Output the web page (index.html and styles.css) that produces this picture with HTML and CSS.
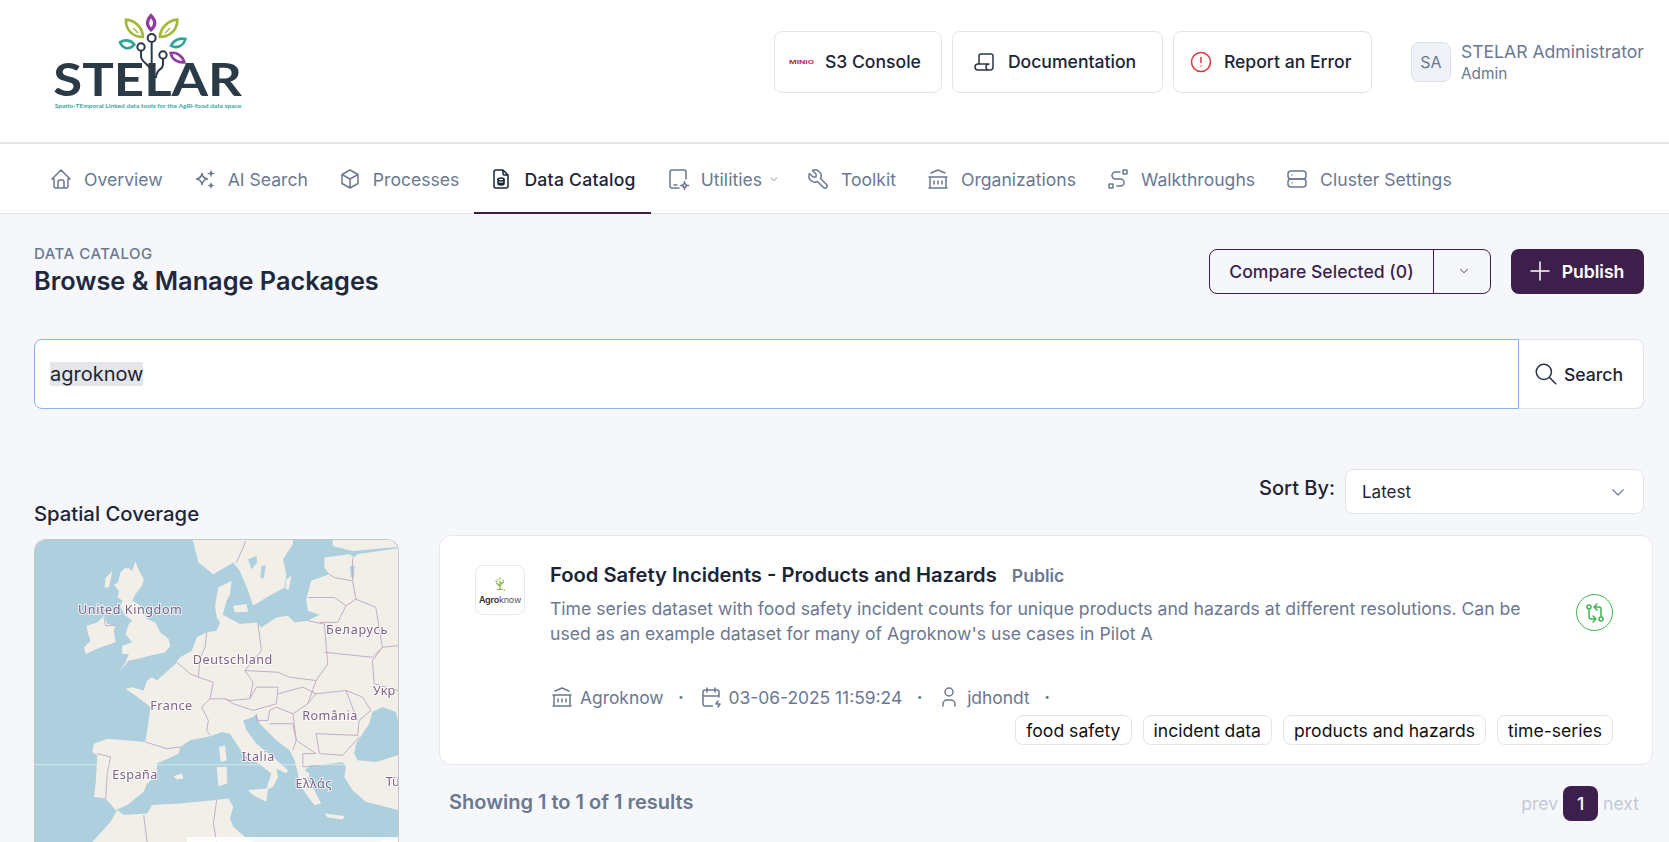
FILE: index.html
```html
<!DOCTYPE html>
<html lang="en">
<head>
<meta charset="utf-8">
<title>STELAR - Data Catalog</title>
<link rel="stylesheet" href="styles.css">
</head>
<body>
<header class="topbar">
  <svg class="logo" viewBox="150 40 600 348" aria-label="STELAR logo">
    <g fill="none" stroke-width="8">
      <path d="M378 60C405 62 430 85 428 112C400 112 376 92 378 60Z" stroke="#a3b83a"/>
      <path d="M400 85L414 100" stroke="#a3b83a" stroke-width="4"/>
      <path d="M532 60C505 62 480 85 480 112C508 112 532 92 532 60Z" stroke="#a3b83a"/>
      <path d="M510 85L496 100" stroke="#a3b83a" stroke-width="4"/>
      <path d="M453 48C466 62 470 75 453 90C437 75 441 62 453 48Z" stroke="#8e3f9c" stroke-width="10"/>
      <path d="M360 128C375 118 395 122 403 135C388 152 368 148 360 128Z" stroke="#2fa39a"/>
      <path d="M556 118C540 114 520 122 513 138C530 148 550 140 556 118Z" stroke="#2fa39a"/>
      <path d="M512 160C530 156 548 170 553 188C534 190 516 180 512 160Z" stroke="#8e3f9c"/>
      <g stroke="#2b3a47" stroke-width="6">
        <path d="M455 128V235M423 154V170C423 190 455 195 455 222M489 178V195C489 212 468 205 468 235"/>
        <circle cx="455" cy="115" r="12"/>
        <circle cx="423" cy="142" r="11"/>
        <circle cx="489" cy="166" r="11"/>
      </g>
    </g>
    <text class="logo-word" x="160" y="290" textLength="566" lengthAdjust="spacingAndGlyphs">STELAR</text>
    <text class="logo-tag" x="164" y="324" textLength="560" lengthAdjust="spacingAndGlyphs">Spatio-TEmporal Linked data tools for the AgRi-food data space</text>
  </svg>
  <div class="top-actions">
    <a class="top-btn s3">
      <svg class="minio" viewBox="0 0 26 6"><text x="0" y="5.200" textLength="26" lengthAdjust="spacingAndGlyphs">MINIO</text></svg>
      S3 Console
    </a>
    <a class="top-btn doc">
      <svg class="ico i-dark" viewBox="0 0 24 24"><path d="M17 20h-11a3 3 0 0 1 0 -6h11a3 3 0 0 0 0 6h1a3 3 0 0 0 3 -3v-11a2 2 0 0 0 -2 -2h-10a2 2 0 0 0 -2 2v8"/></svg>
      Documentation
    </a>
    <a class="top-btn err">
      <svg class="ico i-red" viewBox="0 0 24 24"><circle cx="12" cy="12" r="9.500"/><path d="M12 7.500v5M12 16h.01"/></svg>
      Report an Error
    </a>
  </div>
  <div class="user">
    <span class="avatar">SA</span>
    <div class="user-text">
      <div class="user-name">STELAR Administrator</div>
      <div class="user-role">Admin</div>
    </div>
  </div>
</header>

<nav class="tabs">
  <a class="tab"><svg class="ico" viewBox="0 0 24 24"><path d="M5 12h-2l9-9l9 9h-2M5 12v7a2 2 0 0 0 2 2h10a2 2 0 0 0 2-2v-7M9 21v-6a2 2 0 0 1 2-2h2a2 2 0 0 1 2 2v6"/></svg>Overview</a>
  <a class="tab"><svg class="ico" viewBox="0 0 24 24"><path d="M9 6.500c.6 3.400 2.400 5 5.500 5.500c-3.100 .5-4.900 2.100-5.500 5.500c-.6-3.400-2.400-5-5.500-5.500c3.100-.5 4.900-2.100 5.500-5.500z"/><path class="solid" d="M18 2.500l1 3l3 1l-3 1l-1 3l-1-3l-3-1l3-1zM18 15l1 2.500l2.500 1l-2.500 1l-1 2.500l-1-2.500l-2.500-1l2.500-1z"/></svg>AI Search</a>
  <a class="tab"><svg class="ico" viewBox="0 0 24 24"><path d="M12 3l8 4.500v9l-8 4.500l-8-4.500v-9zM12 12l8-4.500M12 12v9M12 12l-8-4.500"/></svg>Processes</a>
  <a class="tab active"><svg class="ico" viewBox="0 0 24 24"><path d="M14 3v4a1 1 0 0 0 1 1h4M17 21h-10a2 2 0 0 1-2-2v-14a2 2 0 0 1 2-2h7l5 5v11a2 2 0 0 1-2 2z"/><ellipse cx="12" cy="12.500" rx="3" ry="1.500"/><path d="M9 12.500v4c0 .8 1.300 1.500 3 1.500s3-.7 3-1.500v-4M9 15c0 .8 1.300 1.500 3 1.500s3-.7 3-1.500"/></svg>Data Catalog</a>
  <a class="tab"><svg class="ico" viewBox="0 0 24 24"><path d="M20 12v-7a2 2 0 0 0-2-2h-12a2 2 0 0 0-2 2v14a2 2 0 0 0 2 2h7M8 18h3"/><circle cx="18.500" cy="18.500" r="1.800"/><path d="M18.500 14.500v2M18.500 20.500v2M14.500 18.500h2M20.500 18.500h2"/></svg>Utilities<svg class="chev" viewBox="0 0 24 24"><path d="M5 9l7 7l7-7"/></svg></a>
  <a class="tab"><svg class="ico" viewBox="0 0 24 24"><path d="M7 10h3v-3l-3.500-3.500a6 6 0 0 1 8 8l6 6a2 2 0 0 1-3 3l-6-6a6 6 0 0 1-8-8l3.500 3.500"/></svg>Toolkit</a>
  <a class="tab"><svg class="ico" viewBox="0 0 24 24"><path d="M3 21h18M3 10h18M5 6l7-3l7 3M4 10v11M20 10v11M8 14v3M12 14v3M16 14v3"/></svg>Organizations</a>
  <a class="tab"><svg class="ico" viewBox="0 0 24 24"><rect x="3" y="17" width="4" height="4" rx=".5"/><rect x="17" y="3" width="4" height="4" rx=".5"/><path d="M14 5h-4.500a3.500 3.500 0 0 0 0 7h5a3.500 3.500 0 0 1 0 7h-3.500"/></svg>Walkthroughs</a>
  <a class="tab"><svg class="ico" viewBox="0 0 24 24"><rect x="3" y="4" width="18" height="8" rx="3"/><rect x="3" y="12" width="18" height="8" rx="3"/><path d="M7 8v.01M7 16v.01"/></svg>Cluster Settings</a>
</nav>

<main class="page">
  <section class="page-head">
    <div>
      <div class="eyebrow">DATA CATALOG</div>
      <h1 class="title">Browse &amp; Manage Packages</h1>
    </div>
    <div class="head-actions">
      <div class="split">
        <span class="split-main">Compare Selected (0)</span>
        <span class="split-caret"><svg class="chev" viewBox="0 0 24 24"><path d="M6 9l6 6l6-6"/></svg></span>
      </div>
      <a class="publish"><svg class="ico" viewBox="0 0 24 24"><path d="M12 3v18M3 12h18"/></svg>Publish</a>
    </div>
  </section>

  <section class="searchbar">
    <div class="search-input"><span class="selected">agroknow</span></div>
    <div class="search-btn"><svg class="ico i-dark" viewBox="0 0 24 24"><path d="M3 10a7 7 0 1 0 14 0a7 7 0 1 0-14 0M21 21l-6-6"/></svg>Search</div>
  </section>

  <section class="content">
    <aside class="side">
      <h2 class="side-title">Spatial Coverage</h2>
      <div class="map">
        <svg class="map-svg" viewBox="102 147 1095 909" preserveAspectRatio="none">
          <rect x="102" y="147" width="1095" height="909" fill="#aed0de"/>
          <g class="land">
            <path d="M375 595L395 590L430 600L440 570L455 560L470 570L525 520L540 500L575 480L590 440L620 425L650 420L660 395L650 380L645 345L655 290L695 270L690 310L680 330L668 372L680 378L720 400L770 395L785 410L830 380L865 375L885 395L925 390L960 372L925 360L920 325L935 270L990 250L975 230L975 200L1050 190L1065 200L1075 190L1197 172V960L1100 935L1060 900L1035 860L1040 830L1030 815L960 825L935 825L915 840L930 850L925 870L945 900L965 940L945 945L925 920L900 880L895 850L885 810L870 780L830 750L780 700L770 670L760 680L730 690L740 720L770 760L825 805L865 840L860 850L830 835L835 860L820 890L800 900L805 880L815 850L790 830L730 790L690 730L665 725L640 735L620 740L570 750L540 770L535 790L470 820L470 855L440 880L430 905L380 945L345 960L315 925L280 920L285 880L290 795L275 785L280 760L320 745L435 755L445 690L450 650L405 615Z"/>
            <path d="M405 210L412 232L430 265L425 285L405 310L395 330L420 345L440 385L465 395L480 425L505 445L510 465L495 485L450 495L410 505L385 510L355 545L375 515L385 490L365 490L365 465L395 455L375 430L385 400L395 390L370 370L360 345L366 330L352 320L355 300L340 282L352 275L360 245L372 232L385 232L395 240Z"/>
            <path d="M315 262L335 240L325 290L312 290Z"/>
            <path d="M310 375L320 400L345 405L340 420L345 455L300 470L255 490L250 470L270 450L262 430L258 405L290 395Z"/>
            <path d="M578 147L595 215L640 250L700 215L720 240L745 300L760 345L800 320L855 290L860 250L850 205L880 160L880 147Z"/>
            <path d="M1000 147H1197V168L1060 180L1000 165Z"/>
            <path d="M700 345L740 340L745 362L705 365Z"/>
            <path d="M657 770L675 765L680 810L662 815Z"/>
            <path d="M650 830L680 830L682 880L655 888Z"/>
            <path d="M745 900L805 895L800 935L760 915Z"/>
            <path d="M520 858L545 850L550 865L530 868Z"/>
            <path d="M975 970L1035 978L1030 988L985 982Z"/>
            <path d="M275 1056L330 995L350 960L370 975L440 970L455 945L540 940L640 930L685 925L700 950L690 985L700 1010L735 1040L760 1056Z"/>
            <path d="M860 265L875 255L868 295L858 295Z"/>
            <path d="M1140 1056L1197 1040V1056Z"/>
          </g>
          <path class="sea" d="M1065 790L1070 760L1110 700L1120 665L1150 650L1190 665L1197 690V795L1130 815L1075 810Z"/>
          <path class="sea" d="M745 205L770 195L772 215L755 235Z"/>
          <path class="sea" d="M785 225L798 222L792 262L782 262Z"/>
          <path class="sea" d="M1052 225L1066 225L1064 262L1055 258Z"/>
          <path class="border" d="M310 380L315 405L345 405M620 425L615 470L600 500L595 560L640 575L630 625L605 650L625 690L620 720L630 735M530 515L570 550L595 560M775 400L785 480L735 540L760 575L750 625L690 630L675 625L630 625M925 390L975 400L985 520M985 520L950 570L870 560L835 545L735 540M975 485L1120 500L1150 470L1197 465M925 320L1005 320L1040 345L1070 325L1060 270L1005 260L990 250M1040 345L1015 395L960 395M1070 325L1130 350L1150 470M750 625L770 590L835 590L830 640L760 660L700 640L675 625M835 610L910 590L950 610L1040 600L1090 620L1115 660L1080 690L1075 735L950 730M950 570L925 640L880 670L830 650M925 640L950 610M950 730L960 790L1030 795L1080 740M810 700L880 700L890 750L880 780M880 670L890 750L950 790L910 790L910 830L960 825M770 670L770 690L805 690L810 660L830 650M1040 600L1075 690M290 790L330 800L320 850L315 925M435 755L500 775L540 770M1150 470L1120 510L1125 580L1197 600M650 930L640 1000L650 1056M430 975L440 1056M738 150L710 215M1060 200L1060 270"/>
          <path class="seam" d="M102 823.500H1197"/>
          <g class="maplabels">
            <text x="232" y="370" textLength="313">United Kingdom</text>
            <text x="980" y="430" textLength="185">Беларусь</text>
            <text x="578" y="520" textLength="240">Deutschland</text>
            <text x="450" y="660" textLength="126">France</text>
            <text x="1122" y="615">Укр</text>
            <text x="908" y="689" textLength="166">România</text>
            <text x="726" y="812" textLength="98">Italia</text>
            <text x="335" y="865" textLength="136">España</text>
            <text x="888" y="894" textLength="108">Ελλάς</text>
            <text x="1160" y="888">Tü</text>
          </g>
        </svg>
        <div class="map-attrib"></div>
      </div>
    </aside>

    <div class="results">
      <div class="sort-row">
        <span class="sort-label">Sort By:</span>
        <div class="select">Latest<svg class="chev" viewBox="0 0 24 24"><path d="M5 9l7 7l7-7"/></svg></div>
      </div>

      <article class="card">
        <div class="card-logo">
          <svg class="tree" viewBox="0 0 24 24">
            <path d="M12 6V18M12 14L7 9M12 12L17 8M8 18H16" stroke="#7fb23f" stroke-width="1.500" fill="none"/>
            <g fill="#9cc04f"><circle cx="12" cy="3" r="1.200"/><circle cx="7" cy="7" r="1.200"/><circle cx="16.500" cy="6" r="1.200"/><circle cx="9" cy="5" r="1"/><circle cx="14" cy="9" r="1"/><circle cx="18" cy="19" r="1"/></g>
          </svg>
          <span class="ak"><b>Agro</b>know</span>
        </div>
        <div class="card-body">
          <div class="card-top">
            <div class="card-text">
              <div class="card-title-row">
                <h3 class="card-title">Food Safety Incidents - Products and Hazards</h3>
                <span class="badge">Public</span>
              </div>
              <p class="desc">Time series dataset with food safety incident counts for unique products and hazards at different resolutions. Can be used as an example dataset for many of Agroknow's use cases in Pilot A</p>
            </div>
            <span class="compare"><svg class="ico" viewBox="0 0 24 24"><path d="M4 6a2 2 0 1 0 4 0a2 2 0 1 0-4 0M16 18a2 2 0 1 0 4 0a2 2 0 1 0-4 0M11 6h5a2 2 0 0 1 2 2v8M14 9l-3-3l3-3M13 18h-5a2 2 0 0 1-2-2v-8M10 15l3 3l-3 3"/></svg></span>
          </div>
          <div class="meta">
            <svg class="ico" viewBox="0 0 24 24"><path d="M3 21h18M3 10h18M5 6l7-3l7 3M4 10v11M20 10v11M8 14v3M12 14v3M16 14v3"/></svg>
            <span>Agroknow</span><span class="dot">·</span>
            <svg class="ico" viewBox="0 0 24 24"><path d="M13.500 21h-7.500a2 2 0 0 1-2-2v-12a2 2 0 0 1 2-2h12a2 2 0 0 1 2 2v5M16 3v4M8 3v4M4 11h16M19 16l-2 3h4l-2 3"/></svg>
            <span>03-06-2025 11:59:24</span><span class="dot">·</span>
            <svg class="ico" viewBox="0 0 24 24"><path d="M8 7a4 4 0 1 0 8 0a4 4 0 0 0-8 0M6 21v-2a4 4 0 0 1 4-4h4a4 4 0 0 1 4 4v2"/></svg>
            <span>jdhondt</span><span class="dot">·</span>
          </div>
          <div class="tags">
            <span class="tag">food safety</span>
            <span class="tag">incident data</span>
            <span class="tag">products and hazards</span>
            <span class="tag">time-series</span>
          </div>
        </div>
      </article>

      <div class="summary">
        <span class="showing">Showing 1 to 1 of 1 results</span>
        <div class="pager"><span>prev</span><b>1</b><span>next</span></div>
      </div>
    </div>
  </section>
</main>
</body>
</html>
```

FILE: styles.css
```css
* { box-sizing: border-box; }
html, body { margin: 0; height: 842px; overflow: hidden; }
body {
  background: #f6f7fb;
  color: #1b2536;
  font-family: Inter, "Liberation Sans", sans-serif;
}
h1, h2, h3, p { margin: 0; }

.ico {
  width: 24px;
  height: 24px;
  flex: none;
  fill: none;
  stroke: currentColor;
  stroke-width: 1.5;
  stroke-linecap: round;
  stroke-linejoin: round;
}
.ico .solid { fill: currentColor; stroke: none; }
.chev {
  fill: none;
  stroke: currentColor;
  stroke-width: 2;
  stroke-linecap: round;
  stroke-linejoin: round;
  flex: none;
}

/* top bar */
.topbar {
  height: 144px;
  background: #fff;
  border-bottom: 2px solid #e4e6ec;
  display: flex;
  align-items: center;
  padding-left: 50px;
  padding-right: 25px;
}
.logo { width: 200px; height: 116px; flex: none; }
.logo-word { font: 700 140px Lato, Inter, sans-serif; fill: #2b3a47; }
.logo-tag { font: 700 15px Lato, Inter, sans-serif; fill: #3aa79c; }
.top-actions {
  display: flex;
  gap: 10px;
  margin-left: auto;
  margin-bottom: 19px;
}
.top-btn {
  height: 62px;
  display: flex;
  align-items: center;
  background: #fff;
  border: 1px solid #e2e4ec;
  border-radius: 8px;
  font-size: 17.6px;
  font-weight: 500;
  color: #1b2536;
}
.s3 { width: 168px; padding-left: 14px; gap: 11px; }
.doc { width: 211px; padding-left: 19px; gap: 12px; }
.err { width: 199px; padding-left: 15px; gap: 11px; }
.minio { width: 25px; height: 6px; flex: none; }
.minio text { font: 700 5.5px Inter, sans-serif; fill: #c72c48; }
.i-dark { color: #2a3647; }
.i-red { color: #d9363e; }
.user { display: flex; align-items: center; gap: 10px; margin-left: 39px; margin-bottom: 19px; }
.avatar {
  width: 40px;
  height: 40px;
  display: flex;
  align-items: center;
  justify-content: center;
  background: #eff2f6;
  border: 1px solid #dde2ea;
  border-radius: 8px;
  font-size: 16px;
  color: #6b7890;
}
.user-text { padding-top: 2px; }
.user-name { font-size: 17.6px; line-height: 22px; color: #6b7890; }
.user-role { font-size: 15.4px; line-height: 22px; color: #6b7890; }

/* tabs */
.tabs {
  height: 70px;
  background: #fff;
  border-bottom: 1px solid #e1e3ea;
  display: flex;
  padding-left: 34px;
}
.tab {
  display: flex;
  align-items: center;
  gap: 11px;
  height: 70px;
  padding: 0 15px;
  font-size: 17.6px;
  color: #6b7890;
}
.tab .chev { width: 10px; height: 10px; margin: 0 -3px 0 -4px; }
.active {
  color: #1b2536;
  padding-top: 2px;
  border-bottom: 2px solid #3d1f4b;
  font-weight: 450;
  letter-spacing: .25px;
}

/* page */
.page { padding: 32px 25px 0 34px; }
.page-head { display: flex; justify-content: space-between; align-items: center; }
.eyebrow { font-size: 15px; line-height: 16px; font-weight: 500; color: #6b7890; letter-spacing: .5px; }
.title { font-size: 25.3px; line-height: 31px; font-weight: 600; color: #1e2a3b; margin-top: 3px; }
.head-actions { display: flex; gap: 20px; }
.split {
  width: 282px;
  height: 45px;
  display: flex;
  border: 1px solid #3d1f4b;
  border-radius: 8px;
  color: #3d1f4b;
  font-size: 17.6px;
  font-weight: 500;
}
.split-main { flex: 1; display: flex; align-items: center; justify-content: center; border-right: 1px solid #3d1f4b; }
.split-caret { width: 56px; padding-left: 4px; display: flex; align-items: center; justify-content: center; }
.split-caret .chev { width: 14px; height: 14px; stroke-width: 1.5; }
.publish {
  width: 133px;
  height: 45px;
  display: flex;
  align-items: center;
  justify-content: center;
  gap: 10px;
  padding-right: 3px;
  background: #3d1f4b;
  color: #fff;
  border-radius: 8px;
  font-size: 17.6px;
  font-weight: 600;
}
.searchbar { display: flex; height: 70px; margin-top: 43px; }
.search-input {
  flex: 1;
  display: flex;
  align-items: center;
  padding-left: 15px;
  background: #fff;
  border: 1px solid #84b5ee;
  border-radius: 8px 0 0 8px;
  font-size: 20px;
  color: #1b2536;
}
.selected { background: #e6e6ea; line-height: 24px; }
.search-btn {
  width: 125px;
  display: flex;
  align-items: center;
  gap: 5px;
  padding-left: 14px;
  background: #fff;
  border: 1px solid #e2e4ec;
  border-left: 0;
  border-radius: 0 8px 8px 0;
  font-size: 17.6px;
  font-weight: 500;
}
.search-btn .ico { width: 26px; height: 26px; stroke-width: 1.4; }

/* content */
.content {
  display: grid;
  grid-template-columns: 365px 1fr;
  column-gap: 40px;
  margin-top: 60px;
}
.side { padding-top: 31px; }
.side-title { font-size: 20.3px; line-height: 28px; font-weight: 500; margin-bottom: 11px; color: #1b2536; }
.map {
  position: relative;
  height: 303px;
  border: 1px solid #c8c8c8;
  border-bottom: 0;
  border-radius: 12px 12px 0 0;
  overflow: hidden;
}
.map-svg { display: block; width: 100%; height: 100%; filter: blur(.35px); }
.land { fill: #f2efe9; }
.sea { fill: #aed0de; }
.border { fill: none; stroke: #c3adc6; stroke-width: 3; stroke-linejoin: round; }
.seam { stroke: #e6f6fb; stroke-width: 2; fill: none; }
.maplabels text {
  font-family: "Noto Sans", sans-serif;
  font-size: 38px;
  fill: #7d6286;
  stroke: #fff;
  stroke-opacity: .75;
  stroke-width: 6px;
  paint-order: stroke;
}
.map-attrib {
  position: absolute;
  right: 0;
  bottom: 0;
  width: 211px;
  height: 5px;
  background: rgba(255, 255, 255, .85);
}

.results { min-width: 0; }
.sort-row { display: flex; justify-content: flex-end; align-items: center; gap: 10px; height: 45px; }
.sort-label { font-size: 20px; font-weight: 500; color: #1b2536; margin-top: -8px; }
.select {
  width: 299px;
  height: 45px;
  display: flex;
  align-items: center;
  justify-content: space-between;
  padding: 0 16px;
  background: #fff;
  border: 1px solid #e2e4ec;
  border-radius: 8px;
  font-size: 17px;
}
.select .chev { width: 18px; height: 18px; color: #6b7890; stroke-width: 1.5; }

.card {
  margin: 21px -9px 0 0;
  height: 230px;
  display: flex;
  gap: 25px;
  padding: 29px 39px 0 35px;
  background: #fff;
  border: 1px solid #e6e8ee;
  border-radius: 12px;
}
.card-logo {
  width: 50px;
  height: 50px;
  flex: none;
  display: flex;
  flex-direction: column;
  align-items: center;
  justify-content: center;
  background: #fff;
  border: 1px solid #e6e8ee;
  border-radius: 8px;
}
.tree { width: 18px; height: 18px; }
.ak { font-size: 9px; line-height: 11px; color: #555; letter-spacing: -.2px; }
.ak b { color: #333; font-weight: 600; }
.card-body { flex: 1; min-width: 0; margin-top: -2px; }
.card-top { display: flex; justify-content: space-between; height: 83px; }
.card-text { width: 990px; }
.card-title-row { display: flex; align-items: center; gap: 15px; height: 24px; }
.card-title { font-size: 20.2px; line-height: 24px; font-weight: 600; color: #1b2536; }
.badge { font-size: 17.6px; font-weight: 600; color: #6b7890; }
.desc { margin-top: 9px; font-size: 17.6px; line-height: 25px; color: #6b7890; }
.compare {
  width: 37px;
  height: 37px;
  margin-top: 31px;
  display: flex;
  align-items: center;
  justify-content: center;
  border: 1px solid #3fb54f;
  border-radius: 50%;
  color: #3fb54f;
  flex: none;
}
.meta {
  display: flex;
  align-items: center;
  height: 24px;
  margin-top: 39px;
  font-size: 17.4px;
  color: #6b7890;
}
.meta .ico { margin-right: 6px; }
.dot { width: 35px; text-align: center; font-weight: 700; }
.tags { display: flex; justify-content: flex-end; gap: 11px; margin-top: 6px; }
.tag {
  height: 30px;
  display: flex;
  align-items: center;
  padding: 0 10px;
  background: #fff;
  border: 1px solid #e2e4ec;
  border-radius: 8px;
  font-size: 17.6px;
  color: #111;
}
.summary { display: flex; justify-content: space-between; align-items: center; margin-top: 21px; padding-left: 10px; height: 35px; }
.showing { font-size: 20px; font-weight: 600; color: #6b7890; margin-top: -3px; }
.pager { display: flex; align-items: center; gap: 5px; font-size: 17.6px; color: #c3c9d6; padding-right: 5px; }
.pager b {
  width: 35px;
  height: 35px;
  display: flex;
  align-items: center;
  justify-content: center;
  background: #3d1f4b;
  border-radius: 8px;
  color: #fff;
  font-weight: 500;
}
```
